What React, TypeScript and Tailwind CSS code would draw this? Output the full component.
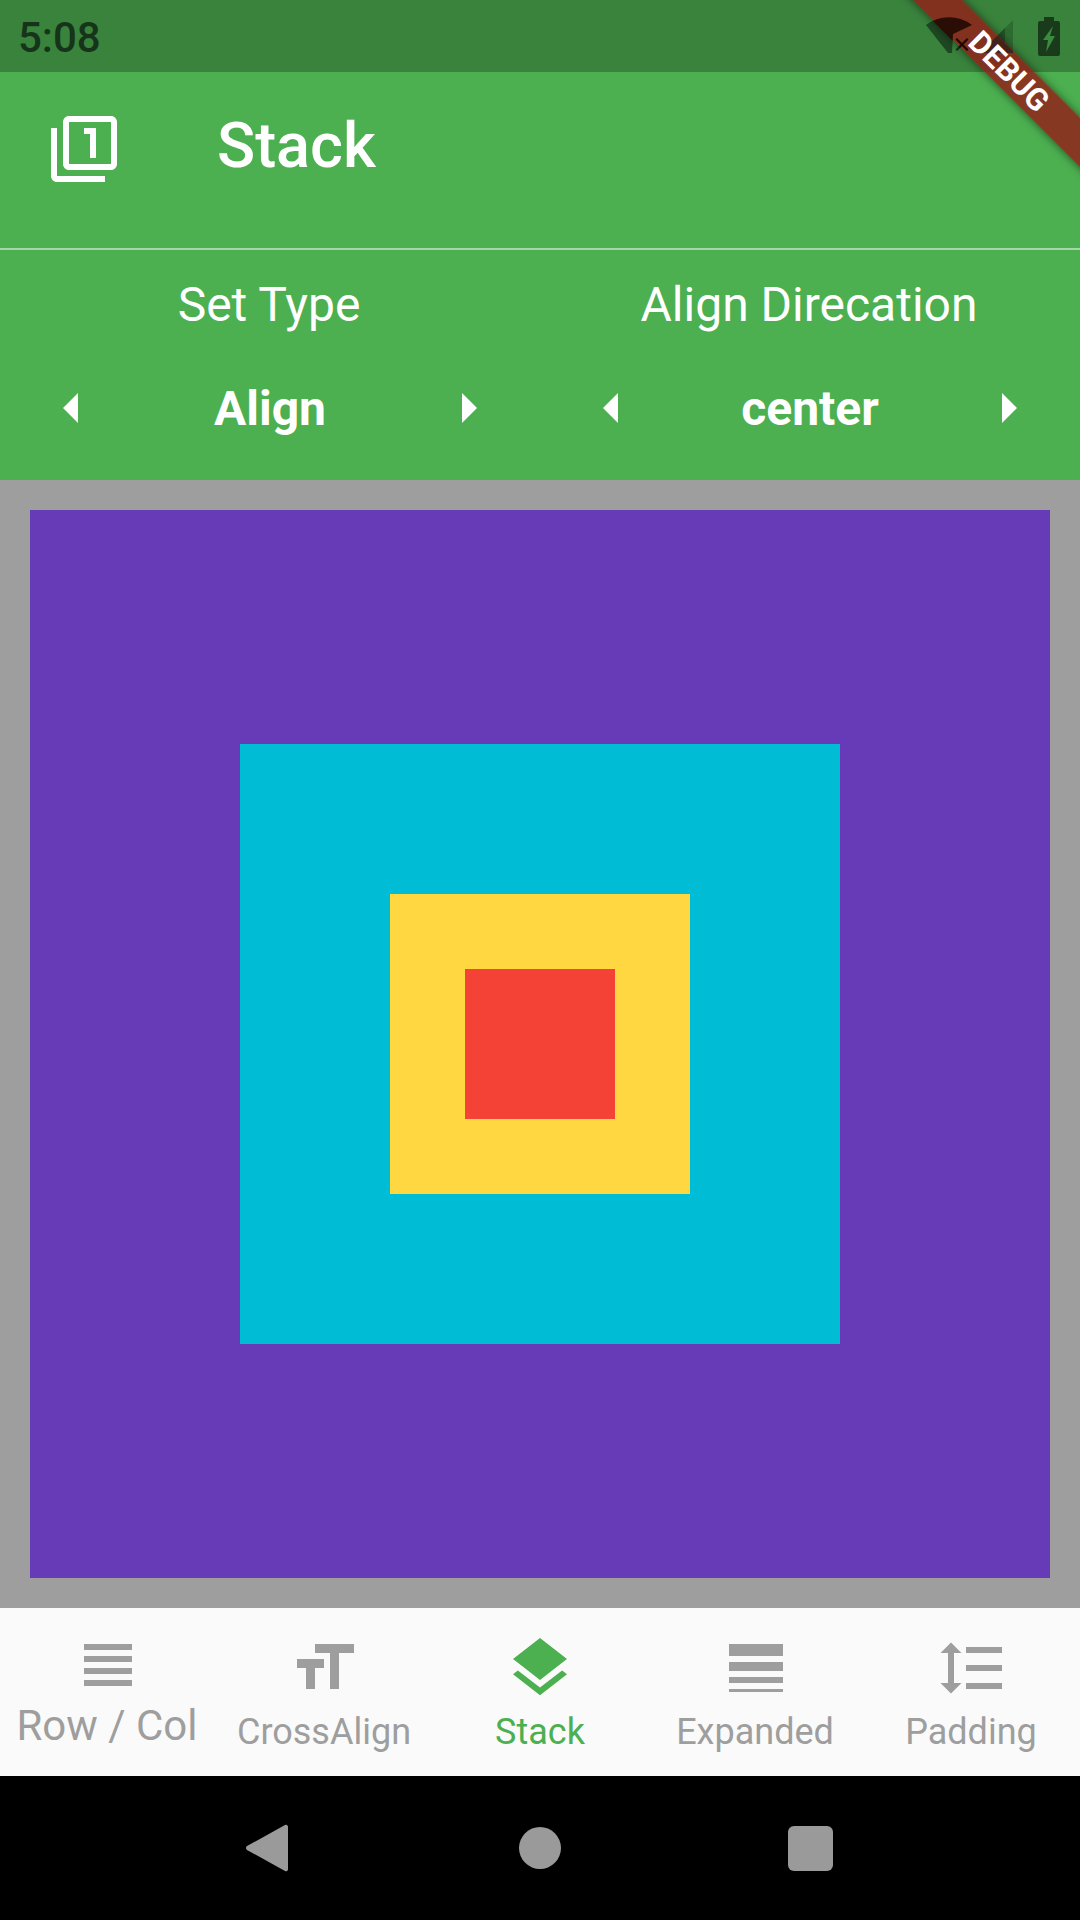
const ROBOTO = "font-['Roboto',sans-serif]";

const NAV_ITEMS = [
  {
    label: "Row / Col",
    path: "M4 15h16v-2H4v2zm0 4h16v-2H4v2zm0-8h16V9H4v2zm0-6v2h16V5H4z",
    labelClass: "-translate-x-px text-[42px] leading-[50px]",
  },
  {
    label: "CrossAlign",
    path: "M9 4v3h5v12h3V7h5V4H9zm-6 8h3v7h3v-7h3V9H3v3z",
    labelClass: "mt-[4px] text-[36px] leading-[48px]",
  },
  {
    label: "Stack",
    path: "M11.99 18.54l-7.37-5.73L3 14.07l9 7 9-7-1.63-1.27-7.38 5.74zM12 16l7.36-5.73L21 9l-9-7-9 7 1.63 1.27L12 16z",
    labelClass: "mt-[4px] text-[36px] leading-[48px]",
  },
  {
    label: "Expanded",
    path: "M3 17h18v-2H3v2zm0 3h18v-1H3v1zm0-7h18v-3H3v3zm0-9v4h18V4H3z",
    labelClass: "mt-[4px] -translate-x-px text-[36px] leading-[48px]",
  },
  {
    label: "Padding",
    path: "M6 7h2.5L5 3.5 1.5 7H4v10H1.5L5 20.5 8.5 17H6V7zm4-2v2h12V5H10zm0 14h12v-2H10v2zm0-6h12v-2H10v2z",
    labelClass: "mt-[4px] -translate-x-px text-[36px] leading-[48px]",
  },
];

// status glyphs in page coordinates, shared with the ribbon overlay
const WIFI = "M926 25 A38 38 0 0 1 972 25 L953 34 L952 53 L948 53 Z";
const WIFI_X = "M957 38 l5 5 l5 -5 l1.5 1.5 l-5 5 l5 5 l-1.5 1.5 l-5 -5 l-5 5 l-1.5 -1.5 l5 -5 l-5 -5 Z";
const SIGNAL = "M1013 20 V53 H980 Z";

function Icon({ d, className }: { d: string; className?: string }) {
  return (
    <svg viewBox="0 0 24 24" fill="currentColor" className={className}>
      <path d={d} />
    </svg>
  );
}

function StatusBar() {
  return (
    <div className="flex h-[72px] items-center justify-between bg-[#39833c] pr-5 pl-[18px]">
      <span className="translate-y-[2px] text-[42px] leading-none font-medium text-[#16341a]">5:08</span>
      <div className="flex items-center">
        <svg viewBox="926 18 46 36" className="h-9 w-[46px]">
          <path d={WIFI} fill="#16341a" fillOpacity="0.75" />
          <path d={WIFI_X} fill="#16341a" />
        </svg>
        <svg viewBox="980 20 33 33" className="ml-2 h-[33px] w-[33px]">
          <path d={SIGNAL} fill="#16341a" fillOpacity="0.3" />
          <path d="M1005 28 V53 H980 Z" fill="#16341a" fillOpacity="0.45" />
        </svg>
        <svg viewBox="0 0 22 39" className="ml-[25px] h-[39px] w-[22px]">
          <path d="M6 0h10v4h4a2 2 0 0 1 2 2v31a2 2 0 0 1-2 2H2a2 2 0 0 1-2-2V6a2 2 0 0 1 2-2h4z" fill="#1a3a1c" />
          <path d="M15 9 L5 23 H10 L8 35 L17 19 H12 Z" fill="#3c8a3e" />
        </svg>
      </div>
    </div>
  );
}

function Picker({ title, value }: { title: string; value: string }) {
  return (
    <div className="flex w-[540px] flex-col items-center">
      <div className="-translate-x-px text-[48px] leading-[56px] text-white">{title}</div>
      <div className="mt-[39px] flex h-[72px] w-full items-center justify-between px-9">
        <Icon d="M14 7l-5 5 5 5V7z" className="size-[72px] text-white" />
        <span className="translate-y-px text-[48px] leading-none font-bold text-white">{value}</span>
        <Icon d="M10 17l5-5-5-5v10z" className="size-[72px] text-white" />
      </div>
    </div>
  );
}

function BottomNav() {
  return (
    <div className="flex h-[168px] bg-[#fafafa]">
      {NAV_ITEMS.map((item, i) => {
        const active = item.label === "Stack";
        return (
          <div
            key={item.label}
            className={`flex w-[216px] flex-col items-center ${i === 0 ? "pt-[21px]" : "pt-6"} ${active ? "text-[#4caf50]" : "text-[#9e9e9e]"}`}
          >
            <Icon d={item.path} className="size-[72px] shrink-0" />
            <span className={item.labelClass}>{item.label}</span>
          </div>
        );
      })}
    </div>
  );
}

export default function App() {
  return (
    <div className={`relative flex h-[1920px] w-[1080px] flex-col overflow-hidden ${ROBOTO}`}>
      <StatusBar />

      <div className="bg-[#4caf50]">
        {/* app bar */}
        <div className="flex h-[176px] items-start pt-[41px] pl-[48px]">
          <Icon
            d="M3 5H1v16c0 1.1.9 2 2 2h16v-2H3V5zm11 10h2V5h-4v2h2v8zm7-14H7c-1.1 0-2 .9-2 2v14c0 1.1.9 2 2 2h14c1.1 0 2-.9 2-2V3c0-1.1-.9-2-2-2zm0 16H7V3h14v14z"
            className="size-[72px] text-white"
          />
          <span className="mt-[-3px] ml-[97px] text-[63px] leading-[72px] font-medium text-white">Stack</span>
        </div>
        <div className="h-[2px] bg-white/50" />
        <div className="flex h-[230px] pt-[27px]">
          <Picker title="Set Type" value="Align" />
          <Picker title="Align Direcation" value="center" />
        </div>
      </div>

      {/* nested boxes, each centred in its parent */}
      <div className="flex-1 bg-[#9e9e9e] p-[30px]">
        <div className="flex h-full items-center justify-center bg-[#673ab7]">
          <div className="flex size-[600px] items-center justify-center bg-[#00bcd4]">
            <div className="flex size-[300px] items-center justify-center bg-[#ffd740]">
              <div className="size-[150px] bg-[#f44336]" />
            </div>
          </div>
        </div>
      </div>

      <BottomNav />

      {/* android nav bar */}
      <div className="flex h-[144px] bg-black">
        <div className="flex w-[1080px] items-center pl-[246px]">
          <svg viewBox="0 0 42 48" className="h-12 w-[42px]">
            <path d="M39 1 a2 2 0 0 1 3 1.5 V45.5 a2 2 0 0 1-3 1.5 L1 26 a2.5 2.5 0 0 1 0-4 Z" fill="#9a9a9a" />
          </svg>
          <div className="ml-[231px] size-[42px] rounded-full bg-[#9a9a9a]" />
          <div className="ml-[227px] h-[45px] w-[45px] rounded-md bg-[#9a9a9a]" />
        </div>
      </div>

      {/* debug ribbon */}
      <div className="absolute top-[52px] left-[857px] h-[35px] w-[300px] rotate-45 bg-[#91231a]/85 shadow-[0_0_8px_rgba(0,0,0,0.55)]" />
      <svg viewBox="900 0 180 72" className="absolute top-0 left-[900px] h-[72px] w-[180px]">
        <clipPath id="ribbon-band">
          <path d="M912 0 H962 L1034 72 H984 Z" />
        </clipPath>
        <g clipPath="url(#ribbon-band)">
          <path d={WIFI} fill="#2a0d05" />
          <path d={WIFI_X} fill="#1c0803" />
          <path d={SIGNAL} fill="#40231a" />
        </g>
      </svg>
      <div className="absolute top-[54px] left-[859px] flex h-[35px] w-[300px] rotate-45 items-center justify-center">
        <span className="text-[31px] leading-none font-bold text-white">DEBUG</span>
      </div>
    </div>
  );
}
